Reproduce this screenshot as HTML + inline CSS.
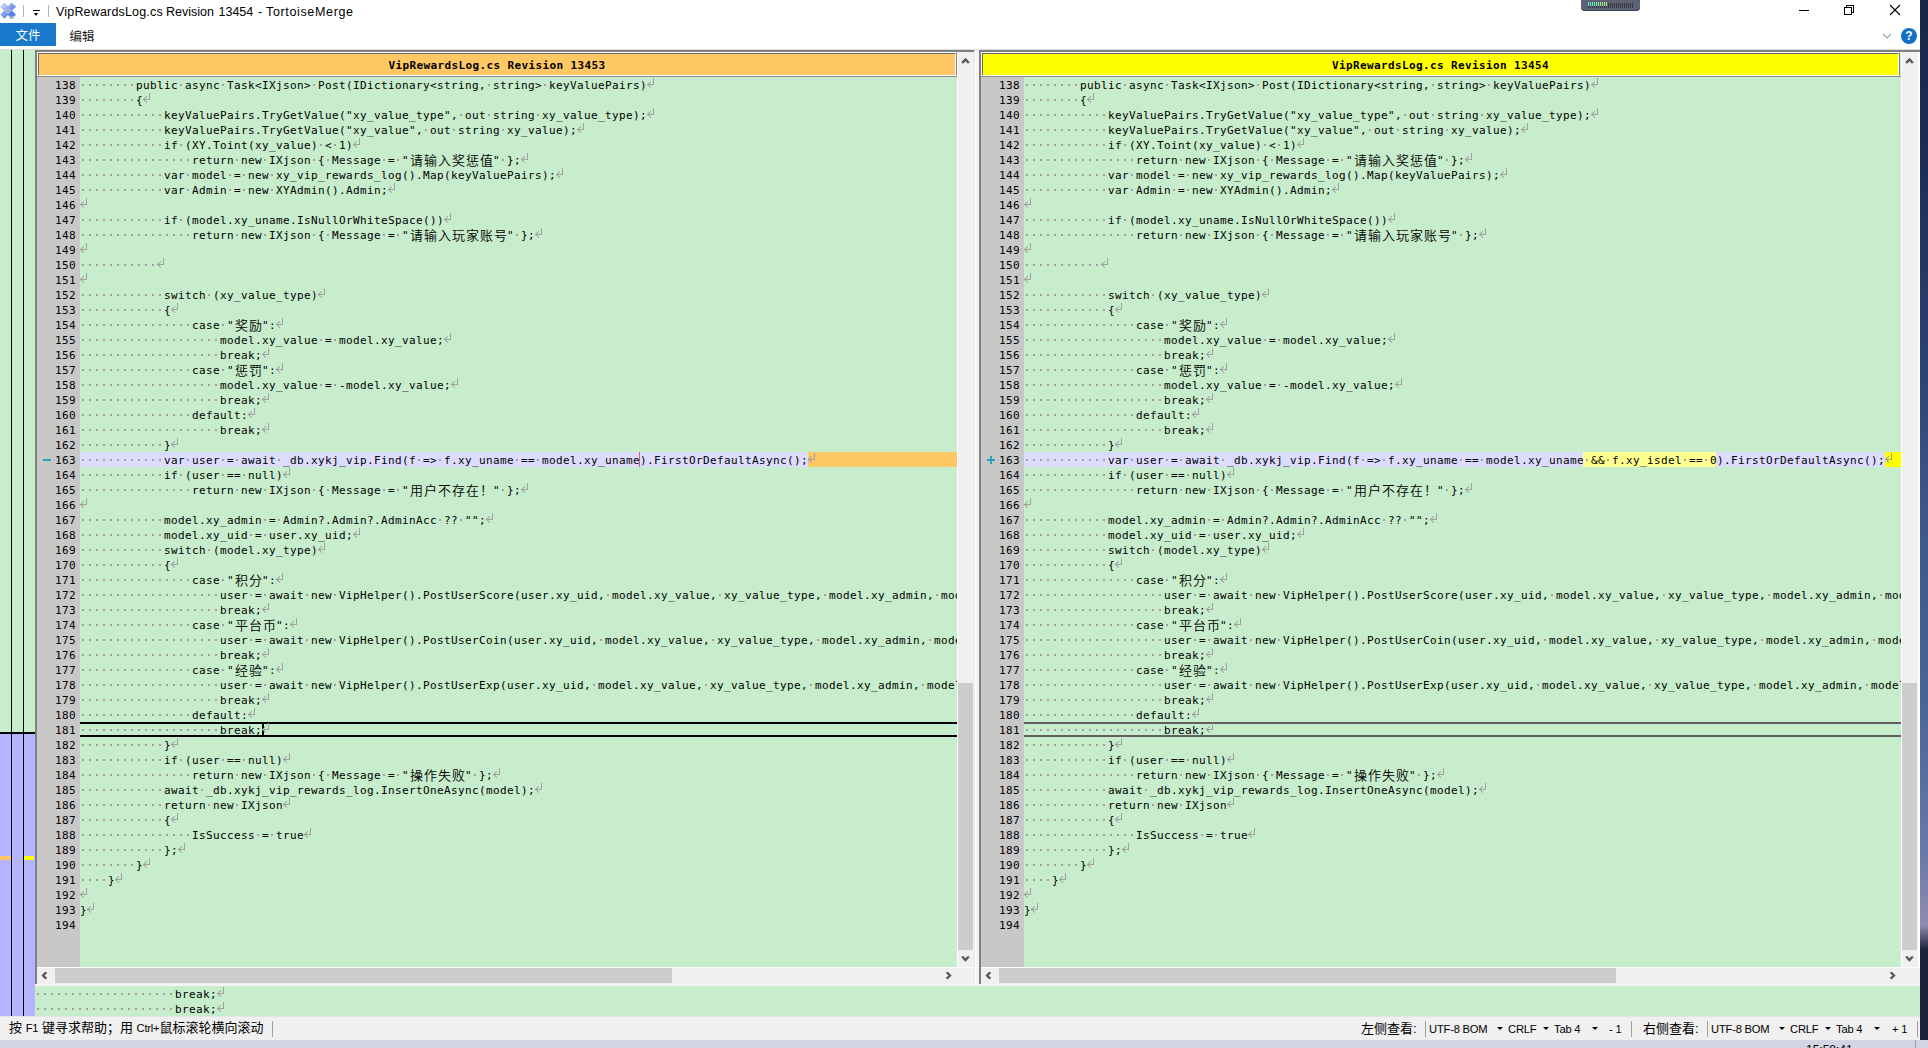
<!DOCTYPE html>
<html lang="zh-CN">
<head>
<meta charset="utf-8">
<title>VipRewardsLog.cs Revision 13454 - TortoiseMerge</title>
<style>
html,body{margin:0;padding:0}
body{width:1928px;height:1048px;overflow:hidden;position:relative;background:linear-gradient(180deg,#18264a 0,#1c2c55 150px,#2c4070 350px,#3d5588 500px,#4a6498 700px,#6878a8 850px,#8f8bb0 925px,#1c2238 950px,#1c2238 1040px);font-family:"Liberation Sans","Noto Sans CJK SC",sans-serif;font-size:12px;color:#000}
.abs,.abs>*{position:absolute}
#under{position:absolute;left:0;top:1040px;width:1928px;height:8px;background:#d2d5e2;overflow:hidden}
#win{position:absolute;left:0;top:0;width:1920px;height:1040px;background:#fff;overflow:hidden}
/* title bar */
#title{position:absolute;left:56px;top:3px;height:18px;line-height:18px;font-size:12.5px;white-space:pre;color:#000;width:400px}
#title span{position:absolute;top:0}
.vsep{position:absolute;width:1px;background:#b4b4b4}
#tabfile{position:absolute;left:0;top:23px;width:56px;height:23px;background:#1979ca;color:#fff;text-align:center;line-height:27px;font-size:12.5px}
#tabedit{position:absolute;left:62px;top:23px;width:40px;height:23px;text-align:center;line-height:29px;font-size:12.5px;color:#222}
/* main */
#loc{position:absolute;left:0;top:49px;width:35px;height:967px;background:#c7edcc;overflow:hidden}
#loc .lav{position:absolute;left:0;top:685px;width:35px;height:282px;background:#b4b4ff}
#loc .hl{position:absolute;left:0;top:683px;width:35px;height:2px;background:#000}
#loc .v{position:absolute;top:0;width:1px;height:967px;background:#000}
.pane{position:absolute;top:50px;height:934px;background:#c7edcc;overflow:hidden}
.hdr{position:absolute;left:0;top:2px;height:24px;box-sizing:border-box;border:1px solid #fff;border-right-color:#808080;border-bottom-color:#fff}
.hdr>div{position:absolute;left:0;top:0;right:0;bottom:0;border:1px solid #696969;border-right:1px solid #fff;border-bottom:0;font:bold 11px/23px "DejaVu Sans Mono","Liberation Mono",monospace;letter-spacing:.3774px;text-align:center;white-space:pre}
.hl2{position:absolute;left:0;top:26px;height:1px;background:#8c8c8c}
.gut{position:absolute;top:27px;width:43px;height:890px;background:#c8c8c8}
.n{position:absolute;left:0;width:39px;height:15px;text-align:right;font:11px/17px "DejaVu Sans Mono","Liberation Mono",monospace;letter-spacing:.3774px;white-space:pre}
.code{position:absolute;top:27px;height:890px;overflow:hidden;font:11px/17px "DejaVu Sans Mono","Liberation Mono",monospace;letter-spacing:.3774px}
.l{position:absolute;left:0;height:15px;white-space:pre;width:2000px}
.l i,.bl i{display:inline-block;height:15px;vertical-align:top;font-style:normal;background:linear-gradient(90deg,transparent 2px,#a0a0a0 2px,#a0a0a0 4px,transparent 4px) 0 7px/7px 2px repeat-x}
.l em,.bl em{display:inline-block;height:15px;vertical-align:top;font:350 13px/15px "Liberation Mono","Noto Sans CJK SC",sans-serif;letter-spacing:1px;position:relative;top:2px;left:1px}
u{display:inline-block;position:relative;width:7px;height:15px;vertical-align:top;text-decoration:none}
u:before{content:"";position:absolute;left:0;top:1px;width:6px;height:6px;border-right:1px solid #a0a0a0;border-bottom:1px solid #a0a0a0}
u:after{content:"";position:absolute;left:.9px;top:5px;width:4px;height:4px;border-left:1px solid #a0a0a0;border-bottom:1px solid #a0a0a0;transform:rotate(45deg)}
.l163.rem{background:#ffc864}
.l163.add{background:#ffff00}
.mod{display:inline-block;height:15px;vertical-align:top;background:#dcdcff}
.ins{display:inline-block;height:15px;vertical-align:top;background:#ffff90;box-shadow:-1px 0 0 #ffff90,inset -1px 0 0 #dcdcff}
b.rm{display:inline-block;width:0;height:15px;vertical-align:top;position:relative}
b.rm:after{content:"";position:absolute;left:-1px;top:0;width:1px;height:15px;background:#c86464}
b.caret{display:inline-block;width:0;height:15px;vertical-align:top;position:relative}
b.caret:after{content:"";position:absolute;left:0;top:0;width:2px;height:14px;background:#000}
.curL:before{content:"";position:absolute;left:0;top:0;width:2000px;height:2px;background:#000}
.curL:after{content:"";position:absolute;left:0;top:13px;width:2000px;height:2px;background:#000}
.curL>*,.curR>*{position:relative}
.curR:before{content:"";position:absolute;left:0;top:0;width:2000px;height:2px;background:#606060}
.curR:after{content:"";position:absolute;left:0;top:13px;width:2000px;height:2px;background:#606060}
b.minus{position:absolute;left:6px;top:7px;width:8px;height:2px;background:#2aa0b6}
b.plus{position:absolute;left:6px;top:7px;width:8px;height:2px;background:#2aa0b6}
b.plus:after{content:"";position:absolute;left:3px;top:-3px;width:2px;height:8px;background:#2aa0b6}
/* scrollbars */
.sb{position:absolute;background:#f0f0f0}
.sbv{border-left:1px solid #fff;box-sizing:border-box}
.sbh{border-top:1px solid #fff;box-sizing:border-box}
.th{position:absolute;background:#cdcdcd}
.sb svg{position:absolute}
/* bottom */
#bl{position:absolute;left:35px;top:986px;width:1885px;height:30px;background:#c7edcc;font:11px/17px "DejaVu Sans Mono","Liberation Mono",monospace;letter-spacing:.3774px;overflow:hidden}
.bl{position:absolute;left:0;height:15px;white-space:pre}
#status{position:absolute;left:0;top:1016px;width:1920px;height:24px;background:#f0f0f0;font-size:13px;overflow:hidden;border-top:1px solid #e4e4e4;box-sizing:border-box}
#status span{position:absolute;top:-1px;height:24px;line-height:25px;white-space:nowrap}
#status .sp{width:1px;top:4px;height:16px;background:#a0a0a0}
#status .dd{width:0;height:0;top:10px;border-left:3px solid transparent;border-right:3px solid transparent;border-top:3px solid #000}
#status .e{font-size:11.2px;letter-spacing:-.2px;line-height:27px}
#status .f{position:static;font-size:11.2px;letter-spacing:-.2px}
</style>
</head>
<body>
<div id="under"><div style="position:absolute;left:1915px;top:0;width:1px;height:8px;background:#9a9db0"></div><div style="position:absolute;left:1806px;top:3px;font-size:12px;line-height:14px;color:#000;white-space:nowrap">15:58:41</div></div>
<div id="win">
<!--TITLEBAR-->
<svg style="position:absolute;left:0;top:2px" width="18" height="18" viewBox="0 0 18 18">
<defs><linearGradient id="g1" x1="0" y1="0" x2="1" y2="1"><stop offset="0" stop-color="#dfe8ff"/><stop offset="1" stop-color="#7f9fea"/></linearGradient>
<linearGradient id="g2" x1="0" y1="0" x2="1" y2="1"><stop offset="0" stop-color="#a9bff8"/><stop offset="1" stop-color="#4f78e0"/></linearGradient></defs>
<path d="M4.4 1 L8.2 4.8 L4.4 8.6 L0.6 4.8 Z" fill="url(#g1)" stroke="#8c9cc8" stroke-width=".5"/>
<path d="M11.6 1 L15.8 4.8 L11.6 8.6 L7.8 4.8 Z" fill="url(#g2)" stroke="#7488c8" stroke-width=".5"/>
<path d="M4.4 8.6 L8.2 12.6 L4.4 16.6 L0.6 12.6 Z" fill="url(#g2)" stroke="#7488c8" stroke-width=".5"/>
<path d="M11.6 8.6 L15.8 12.6 L11.6 16.6 L7.8 12.6 Z" fill="#5580ea" stroke="#6c84c8" stroke-width=".5"/>
<path d="M8 5.2 L11.5 8.7 L8 12.2 L4.5 8.7 Z" fill="#7d97d8"/>
<path d="M8 6.6 L9 7.6 L8 8.6 L7 7.6 Z M6 7.8 L7 8.8 L6 9.8 L5 8.8 Z M10 7.8 L11 8.8 L10 9.8 L9 8.8 Z M8 9.6 L9 10.6 L8 11.6 L7 10.6 Z" fill="#d5def6"/>
<ellipse cx="11.5" cy="15.3" rx="2.6" ry="1.6" fill="#9fb0d8" opacity=".8"/>
</svg>
<div class="vsep" style="left:23px;top:5px;height:12px"></div>
<div style="position:absolute;left:33px;top:10px;width:7px;height:1px;background:#000"></div>
<div style="position:absolute;left:34px;top:13px;width:0;height:0;border-left:2.5px solid transparent;border-right:2.5px solid transparent;border-top:3px solid #000"></div>
<div class="vsep" style="left:48px;top:5px;height:12px"></div>
<div id="title"><span style="left:0;letter-spacing:.18px">VipRewardsLog.cs</span> <span style="left:110px">Revision</span> <span style="left:162.5px">13454</span> <span style="left:202px">-</span> <span style="left:210px;letter-spacing:.65px">TortoiseMerge</span></div>
<div id="tabfile">文件</div>
<div id="tabedit">编辑</div>
<!--floating widget-->
<div style="position:absolute;left:1581px;top:-3px;width:59px;height:14px;background:#5d6375;border-radius:4px;box-shadow:inset 0 -1px 0 #3c4050">
<div style="position:absolute;left:7px;top:6px;width:46px;height:5px;background:repeating-linear-gradient(90deg,#33363f 0,#33363f 1px,transparent 1px,transparent 2px)"></div>
<div style="position:absolute;left:7px;top:5px;width:20px;height:4px;background:linear-gradient(90deg,#4ce8d4,#7af0a0 50%,#d8ea54)"></div>
<div style="position:absolute;left:8px;top:5px;width:20px;height:4px;background:repeating-linear-gradient(90deg,#5d6375 0,#5d6375 1px,transparent 1px,transparent 2px)"></div>
</div>
<!--window controls-->
<div style="position:absolute;left:1799px;top:10px;width:10px;height:1px;background:#000"></div>
<div style="position:absolute;left:1846px;top:5px;width:6px;height:6px;border:1px solid #000"></div>
<div style="position:absolute;left:1844px;top:7px;width:6px;height:6px;border:1px solid #000;background:#fff"></div>
<svg style="position:absolute;left:1889px;top:4px" width="12" height="12" viewBox="0 0 12 12"><path d="M1 1 L11 11 M11 1 L1 11" stroke="#000" stroke-width="1.1" fill="none"/></svg>
<svg style="position:absolute;left:1881px;top:32px" width="12" height="8" viewBox="0 0 12 8"><path d="M2 2 L6 6 L10 2" stroke="#a0a0a0" stroke-width="1.1" fill="none"/></svg>
<div style="position:absolute;left:1901px;top:28px;width:16px;height:16px;border-radius:8px;background:#1270c8;color:#fff;font:bold 12px/17px 'Liberation Sans',sans-serif;text-align:center">?</div>
<div style="position:absolute;left:0;top:49px;width:1920px;height:1px;background:#dcdcdc;z-index:5"></div>
<!--LOCATOR-->
<div id="loc"><div class="lav"></div><div class="hl"></div><div class="v" style="left:11px"></div><div class="v" style="left:23px"></div>
<div style="position:absolute;left:0;top:807px;width:11px;height:4px;background:#ffc864"></div>
<div style="position:absolute;left:24px;top:807px;width:10px;height:4px;background:#ffff00"></div>
</div>
<!--LEFT PANE-->
<div class="pane" id="pl" style="left:35px;width:939px;border-left:2px solid #808080;border-top:2px solid #808080;box-sizing:border-box;top:50px;height:934px">
</div>
<div class="abs" id="lp" style="position:absolute;left:37px;top:50px;width:937px;height:934px">
 <div class="hdr" style="width:920px"><div style="background:#ffc864">VipRewardsLog.cs Revision 13453</div></div>
 <div class="hl2" style="width:920px"></div>
 <div class="gut" style="left:0">
<div class="n" style="top:0px">138</div>
<div class="n" style="top:15px">139</div>
<div class="n" style="top:30px">140</div>
<div class="n" style="top:45px">141</div>
<div class="n" style="top:60px">142</div>
<div class="n" style="top:75px">143</div>
<div class="n" style="top:90px">144</div>
<div class="n" style="top:105px">145</div>
<div class="n" style="top:120px">146</div>
<div class="n" style="top:135px">147</div>
<div class="n" style="top:150px">148</div>
<div class="n" style="top:165px">149</div>
<div class="n" style="top:180px">150</div>
<div class="n" style="top:195px">151</div>
<div class="n" style="top:210px">152</div>
<div class="n" style="top:225px">153</div>
<div class="n" style="top:240px">154</div>
<div class="n" style="top:255px">155</div>
<div class="n" style="top:270px">156</div>
<div class="n" style="top:285px">157</div>
<div class="n" style="top:300px">158</div>
<div class="n" style="top:315px">159</div>
<div class="n" style="top:330px">160</div>
<div class="n" style="top:345px">161</div>
<div class="n" style="top:360px">162</div>
<div class="n" style="top:375px"><b class="minus"></b>163</div>
<div class="n" style="top:390px">164</div>
<div class="n" style="top:405px">165</div>
<div class="n" style="top:420px">166</div>
<div class="n" style="top:435px">167</div>
<div class="n" style="top:450px">168</div>
<div class="n" style="top:465px">169</div>
<div class="n" style="top:480px">170</div>
<div class="n" style="top:495px">171</div>
<div class="n" style="top:510px">172</div>
<div class="n" style="top:525px">173</div>
<div class="n" style="top:540px">174</div>
<div class="n" style="top:555px">175</div>
<div class="n" style="top:570px">176</div>
<div class="n" style="top:585px">177</div>
<div class="n" style="top:600px">178</div>
<div class="n" style="top:615px">179</div>
<div class="n" style="top:630px">180</div>
<div class="n" style="top:645px">181</div>
<div class="n" style="top:660px">182</div>
<div class="n" style="top:675px">183</div>
<div class="n" style="top:690px">184</div>
<div class="n" style="top:705px">185</div>
<div class="n" style="top:720px">186</div>
<div class="n" style="top:735px">187</div>
<div class="n" style="top:750px">188</div>
<div class="n" style="top:765px">189</div>
<div class="n" style="top:780px">190</div>
<div class="n" style="top:795px">191</div>
<div class="n" style="top:810px">192</div>
<div class="n" style="top:825px">193</div>
<div class="n" style="top:840px">194</div>
 </div>
 <div class="code" style="left:43px;width:877px">
<div class="l" style="top:0px"><i>        </i>public<i> </i>async<i> </i>Task&lt;IXjson&gt;<i> </i>Post(IDictionary&lt;string,<i> </i>string&gt;<i> </i>keyValuePairs)<u></u></div>
<div class="l" style="top:15px"><i>        </i>{<u></u></div>
<div class="l" style="top:30px"><i>            </i>keyValuePairs.TryGetValue("xy_value_type",<i> </i>out<i> </i>string<i> </i>xy_value_type);<u></u></div>
<div class="l" style="top:45px"><i>            </i>keyValuePairs.TryGetValue("xy_value",<i> </i>out<i> </i>string<i> </i>xy_value);<u></u></div>
<div class="l" style="top:60px"><i>            </i>if<i> </i>(XY.Toint(xy_value)<i> </i>&lt;<i> </i>1)<u></u></div>
<div class="l" style="top:75px"><i>                </i>return<i> </i>new<i> </i>IXjson<i> </i>{<i> </i>Message<i> </i>=<i> </i>"<em>请输入奖惩值</em>"<i> </i>};<u></u></div>
<div class="l" style="top:90px"><i>            </i>var<i> </i>model<i> </i>=<i> </i>new<i> </i>xy_vip_rewards_log().Map(keyValuePairs);<u></u></div>
<div class="l" style="top:105px"><i>            </i>var<i> </i>Admin<i> </i>=<i> </i>new<i> </i>XYAdmin().Admin;<u></u></div>
<div class="l" style="top:120px"><u></u></div>
<div class="l" style="top:135px"><i>            </i>if<i> </i>(model.xy_uname.IsNullOrWhiteSpace())<u></u></div>
<div class="l" style="top:150px"><i>                </i>return<i> </i>new<i> </i>IXjson<i> </i>{<i> </i>Message<i> </i>=<i> </i>"<em>请输入玩家账号</em>"<i> </i>};<u></u></div>
<div class="l" style="top:165px"><u></u></div>
<div class="l" style="top:180px"><i>           </i><u></u></div>
<div class="l" style="top:195px"><u></u></div>
<div class="l" style="top:210px"><i>            </i>switch<i> </i>(xy_value_type)<u></u></div>
<div class="l" style="top:225px"><i>            </i>{<u></u></div>
<div class="l" style="top:240px"><i>                </i>case<i> </i>"<em>奖励</em>":<u></u></div>
<div class="l" style="top:255px"><i>                    </i>model.xy_value<i> </i>=<i> </i>model.xy_value;<u></u></div>
<div class="l" style="top:270px"><i>                    </i>break;<u></u></div>
<div class="l" style="top:285px"><i>                </i>case<i> </i>"<em>惩罚</em>":<u></u></div>
<div class="l" style="top:300px"><i>                    </i>model.xy_value<i> </i>=<i> </i>-model.xy_value;<u></u></div>
<div class="l" style="top:315px"><i>                    </i>break;<u></u></div>
<div class="l" style="top:330px"><i>                </i>default:<u></u></div>
<div class="l" style="top:345px"><i>                    </i>break;<u></u></div>
<div class="l" style="top:360px"><i>            </i>}<u></u></div>
<div class="l l163 rem" style="top:375px"><span class="mod"><i>            </i>var<i> </i>user<i> </i>=<i> </i>await<i> </i>_db.xykj_vip.Find(f<i> </i>=&gt;<i> </i>f.xy_uname<i> </i>==<i> </i>model.xy_uname<b class="rm"></b>).FirstOrDefaultAsync();</span><u></u></div>
<div class="l" style="top:390px"><i>            </i>if<i> </i>(user<i> </i>==<i> </i>null)<u></u></div>
<div class="l" style="top:405px"><i>                </i>return<i> </i>new<i> </i>IXjson<i> </i>{<i> </i>Message<i> </i>=<i> </i>"<em>用户不存在！</em>"<i> </i>};<u></u></div>
<div class="l" style="top:420px"><u></u></div>
<div class="l" style="top:435px"><i>            </i>model.xy_admin<i> </i>=<i> </i>Admin?.Admin?.AdminAcc<i> </i>??<i> </i>"";<u></u></div>
<div class="l" style="top:450px"><i>            </i>model.xy_uid<i> </i>=<i> </i>user.xy_uid;<u></u></div>
<div class="l" style="top:465px"><i>            </i>switch<i> </i>(model.xy_type)<u></u></div>
<div class="l" style="top:480px"><i>            </i>{<u></u></div>
<div class="l" style="top:495px"><i>                </i>case<i> </i>"<em>积分</em>":<u></u></div>
<div class="l" style="top:510px"><i>                    </i>user<i> </i>=<i> </i>await<i> </i>new<i> </i>VipHelper().PostUserScore(user.xy_uid,<i> </i>model.xy_value,<i> </i>xy_value_type,<i> </i>model.xy_admin,<i> </i>model.xy_remark);<u></u></div>
<div class="l" style="top:525px"><i>                    </i>break;<u></u></div>
<div class="l" style="top:540px"><i>                </i>case<i> </i>"<em>平台币</em>":<u></u></div>
<div class="l" style="top:555px"><i>                    </i>user<i> </i>=<i> </i>await<i> </i>new<i> </i>VipHelper().PostUserCoin(user.xy_uid,<i> </i>model.xy_value,<i> </i>xy_value_type,<i> </i>model.xy_admin,<i> </i>model.xy_remark);<u></u></div>
<div class="l" style="top:570px"><i>                    </i>break;<u></u></div>
<div class="l" style="top:585px"><i>                </i>case<i> </i>"<em>经验</em>":<u></u></div>
<div class="l" style="top:600px"><i>                    </i>user<i> </i>=<i> </i>await<i> </i>new<i> </i>VipHelper().PostUserExp(user.xy_uid,<i> </i>model.xy_value,<i> </i>xy_value_type,<i> </i>model.xy_admin,<i> </i>model.xy_remark);<u></u></div>
<div class="l" style="top:615px"><i>                    </i>break;<u></u></div>
<div class="l" style="top:630px"><i>                </i>default:<u></u></div>
<div class="l curL" style="top:645px"><i>                    </i>break;<b class="caret"></b><u></u></div>
<div class="l" style="top:660px"><i>            </i>}<u></u></div>
<div class="l" style="top:675px"><i>            </i>if<i> </i>(user<i> </i>==<i> </i>null)<u></u></div>
<div class="l" style="top:690px"><i>                </i>return<i> </i>new<i> </i>IXjson<i> </i>{<i> </i>Message<i> </i>=<i> </i>"<em>操作失败</em>"<i> </i>};<u></u></div>
<div class="l" style="top:705px"><i>            </i>await<i> </i>_db.xykj_vip_rewards_log.InsertOneAsync(model);<u></u></div>
<div class="l" style="top:720px"><i>            </i>return<i> </i>new<i> </i>IXjson<u></u></div>
<div class="l" style="top:735px"><i>            </i>{<u></u></div>
<div class="l" style="top:750px"><i>                </i>IsSuccess<i> </i>=<i> </i>true<u></u></div>
<div class="l" style="top:765px"><i>            </i>};<u></u></div>
<div class="l" style="top:780px"><i>        </i>}<u></u></div>
<div class="l" style="top:795px"><i>    </i>}<u></u></div>
<div class="l" style="top:810px"><u></u></div>
<div class="l" style="top:825px">}<u></u></div>
<div class="l" style="top:840px"></div>
 </div>
 <div class="sb sbv" style="left:920px;top:2px;width:17px;height:915px"><div class="th" style="left:0;top:631px;width:15px;height:267px"></div><svg style="left:3px;top:5px" width="9" height="8" viewBox="0 0 9 8"><path d="M1.2 6 L4.5 2.5 L7.8 6" stroke="#555" stroke-width="2.3" fill="none"/></svg><svg style="left:3px;top:903px" width="9" height="8" viewBox="0 0 9 8"><path d="M1.2 1.5 L4.5 5 L7.8 1.5" stroke="#555" stroke-width="2.3" fill="none"/></svg></div>
 <div class="sb sbh" style="left:0;top:917px;width:937px;height:17px"><div class="th" style="left:18px;top:0;width:617px;height:15px"></div><svg style="left:4px;top:3px" width="7" height="9" viewBox="0 0 7 9"><path d="M5.3 1.2 L2 4.5 L5.3 7.8" stroke="#555" stroke-width="2.3" fill="none"/></svg><svg style="left:908px;top:3px" width="7" height="9" viewBox="0 0 7 9"><path d="M1.7 1.2 L5 4.5 L1.7 7.8" stroke="#555" stroke-width="2.3" fill="none"/></svg></div>
</div>
<!--SPLITTER-->
<div style="position:absolute;left:974px;top:49px;width:5px;height:936px;background:linear-gradient(90deg,#e8e8e8 0,#e8e8e8 1px,#fff 1px,#fff 2px,#f4f4f4 2px,#f4f4f4 5px)"></div>
<!--RIGHT PANE-->
<div class="pane" id="pr" style="left:979px;width:941px;border-left:2px solid #808080;border-top:2px solid #808080;box-sizing:border-box;top:50px;height:934px">
</div>
<div class="abs" id="rp" style="position:absolute;left:981px;top:50px;width:939px;height:934px">
 <div class="hdr" style="width:919px"><div style="background:#ffff00">VipRewardsLog.cs Revision 13454</div></div>
 <div class="hl2" style="width:920px"></div>
 <div class="gut" style="left:0">
<div class="n" style="top:0px">138</div>
<div class="n" style="top:15px">139</div>
<div class="n" style="top:30px">140</div>
<div class="n" style="top:45px">141</div>
<div class="n" style="top:60px">142</div>
<div class="n" style="top:75px">143</div>
<div class="n" style="top:90px">144</div>
<div class="n" style="top:105px">145</div>
<div class="n" style="top:120px">146</div>
<div class="n" style="top:135px">147</div>
<div class="n" style="top:150px">148</div>
<div class="n" style="top:165px">149</div>
<div class="n" style="top:180px">150</div>
<div class="n" style="top:195px">151</div>
<div class="n" style="top:210px">152</div>
<div class="n" style="top:225px">153</div>
<div class="n" style="top:240px">154</div>
<div class="n" style="top:255px">155</div>
<div class="n" style="top:270px">156</div>
<div class="n" style="top:285px">157</div>
<div class="n" style="top:300px">158</div>
<div class="n" style="top:315px">159</div>
<div class="n" style="top:330px">160</div>
<div class="n" style="top:345px">161</div>
<div class="n" style="top:360px">162</div>
<div class="n" style="top:375px"><b class="plus"></b>163</div>
<div class="n" style="top:390px">164</div>
<div class="n" style="top:405px">165</div>
<div class="n" style="top:420px">166</div>
<div class="n" style="top:435px">167</div>
<div class="n" style="top:450px">168</div>
<div class="n" style="top:465px">169</div>
<div class="n" style="top:480px">170</div>
<div class="n" style="top:495px">171</div>
<div class="n" style="top:510px">172</div>
<div class="n" style="top:525px">173</div>
<div class="n" style="top:540px">174</div>
<div class="n" style="top:555px">175</div>
<div class="n" style="top:570px">176</div>
<div class="n" style="top:585px">177</div>
<div class="n" style="top:600px">178</div>
<div class="n" style="top:615px">179</div>
<div class="n" style="top:630px">180</div>
<div class="n" style="top:645px">181</div>
<div class="n" style="top:660px">182</div>
<div class="n" style="top:675px">183</div>
<div class="n" style="top:690px">184</div>
<div class="n" style="top:705px">185</div>
<div class="n" style="top:720px">186</div>
<div class="n" style="top:735px">187</div>
<div class="n" style="top:750px">188</div>
<div class="n" style="top:765px">189</div>
<div class="n" style="top:780px">190</div>
<div class="n" style="top:795px">191</div>
<div class="n" style="top:810px">192</div>
<div class="n" style="top:825px">193</div>
<div class="n" style="top:840px">194</div>
 </div>
 <div class="code" style="left:43px;width:877px">
<div class="l" style="top:0px"><i>        </i>public<i> </i>async<i> </i>Task&lt;IXjson&gt;<i> </i>Post(IDictionary&lt;string,<i> </i>string&gt;<i> </i>keyValuePairs)<u></u></div>
<div class="l" style="top:15px"><i>        </i>{<u></u></div>
<div class="l" style="top:30px"><i>            </i>keyValuePairs.TryGetValue("xy_value_type",<i> </i>out<i> </i>string<i> </i>xy_value_type);<u></u></div>
<div class="l" style="top:45px"><i>            </i>keyValuePairs.TryGetValue("xy_value",<i> </i>out<i> </i>string<i> </i>xy_value);<u></u></div>
<div class="l" style="top:60px"><i>            </i>if<i> </i>(XY.Toint(xy_value)<i> </i>&lt;<i> </i>1)<u></u></div>
<div class="l" style="top:75px"><i>                </i>return<i> </i>new<i> </i>IXjson<i> </i>{<i> </i>Message<i> </i>=<i> </i>"<em>请输入奖惩值</em>"<i> </i>};<u></u></div>
<div class="l" style="top:90px"><i>            </i>var<i> </i>model<i> </i>=<i> </i>new<i> </i>xy_vip_rewards_log().Map(keyValuePairs);<u></u></div>
<div class="l" style="top:105px"><i>            </i>var<i> </i>Admin<i> </i>=<i> </i>new<i> </i>XYAdmin().Admin;<u></u></div>
<div class="l" style="top:120px"><u></u></div>
<div class="l" style="top:135px"><i>            </i>if<i> </i>(model.xy_uname.IsNullOrWhiteSpace())<u></u></div>
<div class="l" style="top:150px"><i>                </i>return<i> </i>new<i> </i>IXjson<i> </i>{<i> </i>Message<i> </i>=<i> </i>"<em>请输入玩家账号</em>"<i> </i>};<u></u></div>
<div class="l" style="top:165px"><u></u></div>
<div class="l" style="top:180px"><i>           </i><u></u></div>
<div class="l" style="top:195px"><u></u></div>
<div class="l" style="top:210px"><i>            </i>switch<i> </i>(xy_value_type)<u></u></div>
<div class="l" style="top:225px"><i>            </i>{<u></u></div>
<div class="l" style="top:240px"><i>                </i>case<i> </i>"<em>奖励</em>":<u></u></div>
<div class="l" style="top:255px"><i>                    </i>model.xy_value<i> </i>=<i> </i>model.xy_value;<u></u></div>
<div class="l" style="top:270px"><i>                    </i>break;<u></u></div>
<div class="l" style="top:285px"><i>                </i>case<i> </i>"<em>惩罚</em>":<u></u></div>
<div class="l" style="top:300px"><i>                    </i>model.xy_value<i> </i>=<i> </i>-model.xy_value;<u></u></div>
<div class="l" style="top:315px"><i>                    </i>break;<u></u></div>
<div class="l" style="top:330px"><i>                </i>default:<u></u></div>
<div class="l" style="top:345px"><i>                    </i>break;<u></u></div>
<div class="l" style="top:360px"><i>            </i>}<u></u></div>
<div class="l l163 add" style="top:375px"><span class="mod"><i>            </i>var<i> </i>user<i> </i>=<i> </i>await<i> </i>_db.xykj_vip.Find(f<i> </i>=&gt;<i> </i>f.xy_uname<i> </i>==<i> </i>model.xy_uname<span class="ins"><i> </i>&amp;&amp;<i> </i>f.xy_isdel<i> </i>==<i> </i>0</span>).FirstOrDefaultAsync();</span><u></u></div>
<div class="l" style="top:390px"><i>            </i>if<i> </i>(user<i> </i>==<i> </i>null)<u></u></div>
<div class="l" style="top:405px"><i>                </i>return<i> </i>new<i> </i>IXjson<i> </i>{<i> </i>Message<i> </i>=<i> </i>"<em>用户不存在！</em>"<i> </i>};<u></u></div>
<div class="l" style="top:420px"><u></u></div>
<div class="l" style="top:435px"><i>            </i>model.xy_admin<i> </i>=<i> </i>Admin?.Admin?.AdminAcc<i> </i>??<i> </i>"";<u></u></div>
<div class="l" style="top:450px"><i>            </i>model.xy_uid<i> </i>=<i> </i>user.xy_uid;<u></u></div>
<div class="l" style="top:465px"><i>            </i>switch<i> </i>(model.xy_type)<u></u></div>
<div class="l" style="top:480px"><i>            </i>{<u></u></div>
<div class="l" style="top:495px"><i>                </i>case<i> </i>"<em>积分</em>":<u></u></div>
<div class="l" style="top:510px"><i>                    </i>user<i> </i>=<i> </i>await<i> </i>new<i> </i>VipHelper().PostUserScore(user.xy_uid,<i> </i>model.xy_value,<i> </i>xy_value_type,<i> </i>model.xy_admin,<i> </i>model.xy_remark);<u></u></div>
<div class="l" style="top:525px"><i>                    </i>break;<u></u></div>
<div class="l" style="top:540px"><i>                </i>case<i> </i>"<em>平台币</em>":<u></u></div>
<div class="l" style="top:555px"><i>                    </i>user<i> </i>=<i> </i>await<i> </i>new<i> </i>VipHelper().PostUserCoin(user.xy_uid,<i> </i>model.xy_value,<i> </i>xy_value_type,<i> </i>model.xy_admin,<i> </i>model.xy_remark);<u></u></div>
<div class="l" style="top:570px"><i>                    </i>break;<u></u></div>
<div class="l" style="top:585px"><i>                </i>case<i> </i>"<em>经验</em>":<u></u></div>
<div class="l" style="top:600px"><i>                    </i>user<i> </i>=<i> </i>await<i> </i>new<i> </i>VipHelper().PostUserExp(user.xy_uid,<i> </i>model.xy_value,<i> </i>xy_value_type,<i> </i>model.xy_admin,<i> </i>model.xy_remark);<u></u></div>
<div class="l" style="top:615px"><i>                    </i>break;<u></u></div>
<div class="l" style="top:630px"><i>                </i>default:<u></u></div>
<div class="l curR" style="top:645px"><i>                    </i>break;<u></u></div>
<div class="l" style="top:660px"><i>            </i>}<u></u></div>
<div class="l" style="top:675px"><i>            </i>if<i> </i>(user<i> </i>==<i> </i>null)<u></u></div>
<div class="l" style="top:690px"><i>                </i>return<i> </i>new<i> </i>IXjson<i> </i>{<i> </i>Message<i> </i>=<i> </i>"<em>操作失败</em>"<i> </i>};<u></u></div>
<div class="l" style="top:705px"><i>            </i>await<i> </i>_db.xykj_vip_rewards_log.InsertOneAsync(model);<u></u></div>
<div class="l" style="top:720px"><i>            </i>return<i> </i>new<i> </i>IXjson<u></u></div>
<div class="l" style="top:735px"><i>            </i>{<u></u></div>
<div class="l" style="top:750px"><i>                </i>IsSuccess<i> </i>=<i> </i>true<u></u></div>
<div class="l" style="top:765px"><i>            </i>};<u></u></div>
<div class="l" style="top:780px"><i>        </i>}<u></u></div>
<div class="l" style="top:795px"><i>    </i>}<u></u></div>
<div class="l" style="top:810px"><u></u></div>
<div class="l" style="top:825px">}<u></u></div>
<div class="l" style="top:840px"></div>
 </div>
 <div class="sb sbv" style="left:920px;top:2px;width:17px;height:915px"><div class="th" style="left:0;top:631px;width:15px;height:267px"></div><svg style="left:3px;top:5px" width="9" height="8" viewBox="0 0 9 8"><path d="M1.2 6 L4.5 2.5 L7.8 6" stroke="#555" stroke-width="2.3" fill="none"/></svg><svg style="left:3px;top:903px" width="9" height="8" viewBox="0 0 9 8"><path d="M1.2 1.5 L4.5 5 L7.8 1.5" stroke="#555" stroke-width="2.3" fill="none"/></svg></div>
 <div style="left:937px;top:2px;width:2px;height:915px;background:#fff"></div>
 <div class="sb sbh" style="left:0;top:917px;width:939px;height:17px"><div class="th" style="left:18px;top:0;width:617px;height:15px"></div><svg style="left:4px;top:3px" width="7" height="9" viewBox="0 0 7 9"><path d="M5.3 1.2 L2 4.5 L5.3 7.8" stroke="#555" stroke-width="2.3" fill="none"/></svg><svg style="left:908px;top:3px" width="7" height="9" viewBox="0 0 7 9"><path d="M1.7 1.2 L5 4.5 L1.7 7.8" stroke="#555" stroke-width="2.3" fill="none"/></svg></div>
</div>
<div style="position:absolute;left:35px;top:984px;width:1885px;height:2px;background:#f4f4f4"></div>
<!--BOTTOM LINE DIFF-->
<div id="bl">
<div class="bl" style="top:0px"><i>                    </i>break;<u></u></div>
<div class="bl" style="top:15px"><i>                    </i>break;<u></u></div>
</div>
<!--STATUS-->
<div id="status">
<span style="left:9px;top:-2px">按 <span class="f">F1</span> 键寻求帮助；用 <span class="f">Ctrl+</span>鼠标滚轮横向滚动</span><span class="sp" style="left:272px"></span>
<span style="left:1361px">左侧查看:</span><span class="sp" style="left:1425px"></span>
<span class="e" style="left:1429px">UTF-8 BOM</span><span class="dd" style="left:1497px"></span><span class="e" style="left:1508px">CRLF</span><span class="dd" style="left:1543px"></span><span class="e" style="left:1554px">Tab 4</span><span class="dd" style="left:1592px"></span><span class="e" style="left:1609px">- 1</span><span class="sp" style="left:1631px"></span>
<span style="left:1643px">右侧查看:</span><span class="sp" style="left:1707px"></span>
<span class="e" style="left:1711px">UTF-8 BOM</span><span class="dd" style="left:1779px"></span><span class="e" style="left:1790px">CRLF</span><span class="dd" style="left:1825px"></span><span class="e" style="left:1836px">Tab 4</span><span class="dd" style="left:1874px"></span><span class="e" style="left:1892px">+ 1</span><span class="sp" style="left:1917px"></span>
</div>
</div>
</body>
</html>
